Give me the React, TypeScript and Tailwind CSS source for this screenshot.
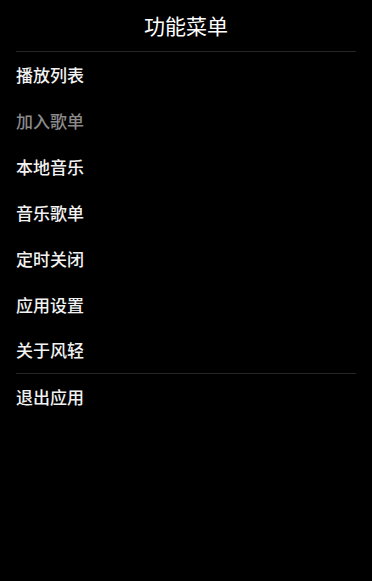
const items = [
  { label: "播放列表" },
  { label: "加入歌单", disabled: true },
  { label: "本地音乐" },
  { label: "音乐歌单" },
  { label: "定时关闭" },
  { label: "应用设置" },
  { label: "关于风轻", divider: true },
  { label: "退出应用" },
];

export default function App() {
  return (
    <div
      className="h-[581px] w-[372px] bg-black text-white"
      style={{ fontFamily: '"Noto Sans CJK SC", "Noto Sans", sans-serif' }}
    >
      <div className="mx-4">
        <div className="flex h-[52px] items-center justify-center border-b border-[#262626] pb-px text-[21px] leading-none">
          功能菜单
        </div>
        <ul>
          {items.map((item) => (
            <li
              key={item.label}
              className={`flex h-[46px] items-center pb-[2px] text-[17px] font-medium leading-none ${
                item.disabled ? "text-[#8a8a8a]" : "text-[#f2f2f2]"
              } ${item.divider ? "border-b border-[#262626]" : ""}`}
            >
              {item.label}
            </li>
          ))}
        </ul>
      </div>
    </div>
  );
}
